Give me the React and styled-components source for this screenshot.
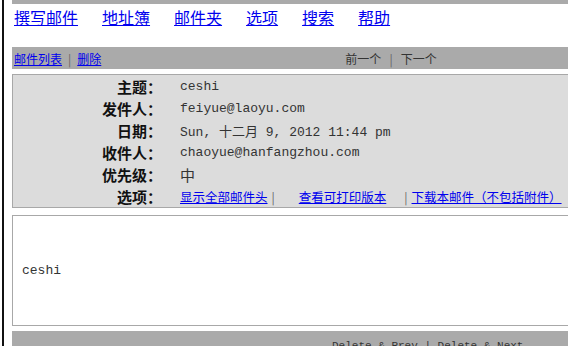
import React from 'react';
import styled, { createGlobalStyle } from 'styled-components';

const COLORS = {
  bar: '#aaaaaa',
  panel: '#dcdcdc',
  border: '#a8a8a8',
  link: '#0000ee',
  text: '#222222',
  muted: '#333333',
};

const CJK = '"Noto Sans CJK SC", "Liberation Sans", sans-serif';
const MONO = '"Liberation Mono", "Noto Sans CJK SC", monospace';

const GlobalStyle = createGlobalStyle`
  html, body {
    margin: 0;
    padding: 0;
    overflow: hidden;
    background: #ffffff;
  }
  body {
    font-family: ${CJK};
    color: ${COLORS.text};
  }
`;

const Frame = styled.div`
  margin-left: 2px;
  border-left: 2px solid #111;
  min-height: 346px;
  padding-left: 8px;
  width: 758px;
`;

const TopBar = styled.div`
  height: 4px;
  background: ${COLORS.bar};
`;

const Nav = styled.nav`
  display: flex;
  gap: 24px;
  padding: 2px 2px 0;
  height: 43px;
  box-sizing: border-box;
`;

const NavLink = styled.a`
  font-size: 16px;
  line-height: 22px;
  color: ${COLORS.link};
  text-decoration: underline;
  cursor: pointer;
`;

const Toolbar = styled.div`
  display: grid;
  grid-template-columns: 1fr auto 1fr;
  align-items: center;
  height: 22px;
  padding: 0 2px;
  background: ${COLORS.bar};
  font-size: 12px;
  color: ${COLORS.muted};
`;

const Group = styled.div`
  display: flex;
  align-items: center;
  gap: ${(p) => p.$gap || 6}px;
  white-space: nowrap;
`;

const SmallLink = styled.a`
  font-size: ${(p) => p.$size || 12}px;
  color: ${COLORS.link};
  text-decoration: underline;
  cursor: pointer;
  white-space: nowrap;
`;

const Sep = styled.span`
  color: #666;
  font-size: 12px;
`;

const HeaderPanel = styled.div`
  margin-top: 5px;
  background: ${COLORS.panel};
  border: 1px solid ${COLORS.border};
  display: grid;
  grid-template-columns: 149px 1fr;
  column-gap: 18px;
  grid-auto-rows: 22px;
  align-items: center;
`;

const Label = styled.div`
  text-align: right;
  font-size: 15px;
  font-weight: bold;
  color: #111;
  white-space: nowrap;
`;

const Value = styled.div`
  font-family: ${MONO};
  font-size: 13px;
  color: ${COLORS.muted};
  white-space: nowrap;
`;

const CjkValue = styled(Value)`
  font-family: ${CJK};
  font-size: 15px;
`;

const BodyBox = styled.div`
  margin-top: 7px;
  height: 109px;
  border: 1px solid ${COLORS.border};
  display: flex;
  align-items: center;
  padding: 0 9px;
  font-family: ${MONO};
  font-size: 13px;
  color: ${COLORS.muted};
`;

const BottomBar = styled.div`
  margin-top: 5px;
  height: 22px;
  background: ${COLORS.bar};
  display: flex;
  align-items: center;
  padding-left: 320px;
  padding-top: 8px;
  box-sizing: border-box;
  font-family: ${MONO};
  font-size: 11px;
  color: ${COLORS.muted};
  white-space: pre;
`;

const NAV = ['撰写邮件', '地址簿', '邮件夹', '选项', '搜索', '帮助'];

const HEADERS = [
  { label: '主题：', value: 'ceshi' },
  { label: '发件人：', value: 'feiyue@laoyu.com' },
  { label: '日期：', value: 'Sun, 十二月 9, 2012 11:44 pm' },
  { label: '收件人：', value: 'chaoyue@hanfangzhou.com' },
];

const App = () => {
  return (
    <>
      <GlobalStyle />
      <Frame>
        <TopBar />
        <Nav>
          {NAV.map((item) => (
            <NavLink key={item}>{item}</NavLink>
          ))}
        </Nav>

        <Toolbar>
          <Group>
            <SmallLink>邮件列表</SmallLink>
            <Sep>|</Sep>
            <SmallLink>删除</SmallLink>
          </Group>
          <Group $gap={8}>
            <span>前一个</span>
            <Sep>|</Sep>
            <span>下一个</span>
          </Group>
          <div />
        </Toolbar>

        <HeaderPanel>
          {HEADERS.map((h) => (
            <React.Fragment key={h.label}>
              <Label>{h.label}</Label>
              <Value>{h.value}</Value>
            </React.Fragment>
          ))}
          <Label>优先级：</Label>
          <CjkValue>中</CjkValue>
          <Label>选项：</Label>
          <Group $gap={4}>
            <SmallLink $size={12.5}>显示全部邮件头</SmallLink>
            <Sep>|</Sep>
            <SmallLink $size={12.5} style={{ marginLeft: 20 }}>查看可打印版本</SmallLink>
            <Sep style={{ marginLeft: 14 }}>|</Sep>
            <SmallLink $size={12.5}>下载本邮件（不包括附件）</SmallLink>
          </Group>
        </HeaderPanel>

        <BodyBox>ceshi</BodyBox>

        <BottomBar>Delete &amp; Prev | Delete &amp; Next</BottomBar>
      </Frame>
    </>
  );
};

export default App;
